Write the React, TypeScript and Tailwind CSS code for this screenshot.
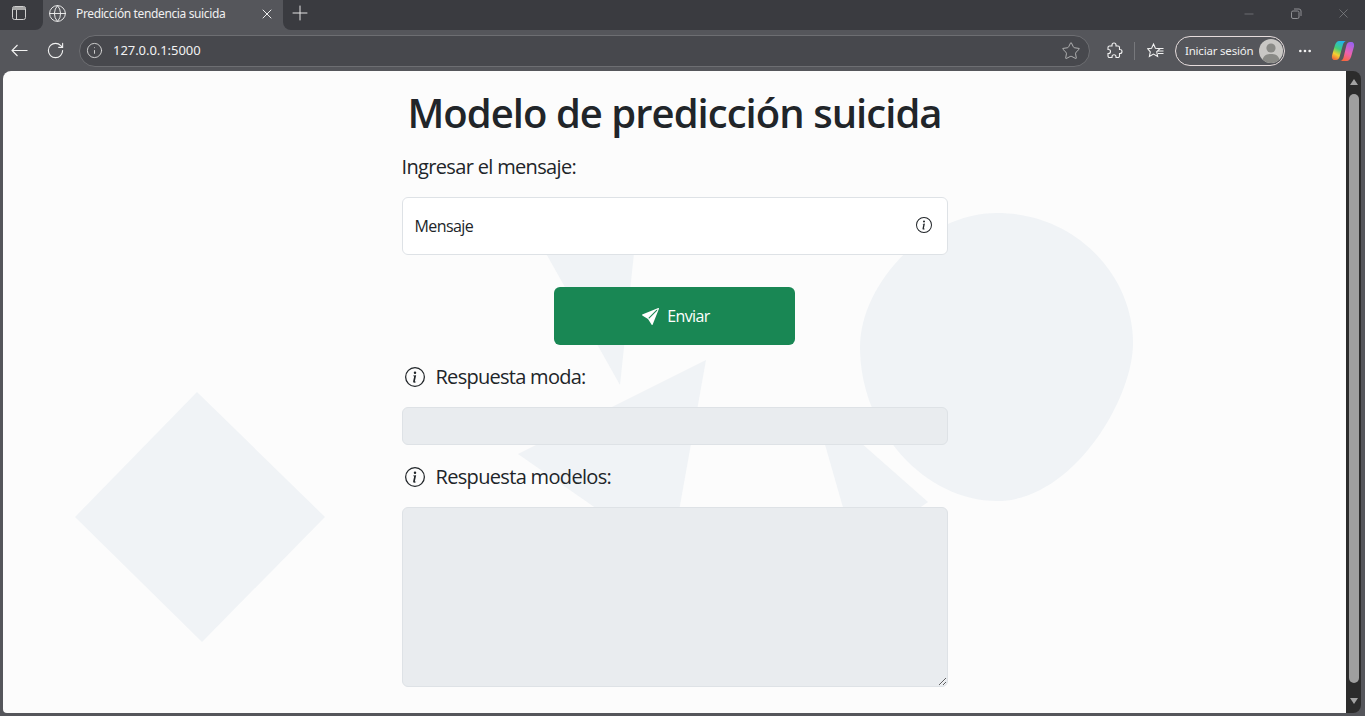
import { RotateCw, Info, Star, Plus, X, Minus, Globe, Ellipsis } from 'lucide-react';

const pageFont = { fontFamily: '"Open Sans", "Noto Sans", sans-serif' };
const chromeFont = { fontFamily: '"Noto Sans", sans-serif' };

function InfoIcon({ size = 20 }: { size?: number }) {
  return (
    <svg width={size} height={size} viewBox="0 0 16 16" fill="currentColor">
      <path d="M8 15A7 7 0 1 1 8 1a7 7 0 0 1 0 14m0 1A8 8 0 1 0 8 0a8 8 0 0 0 0 16" />
      <path d="m8.93 6.588-2.29.287-.082.38.45.083c.294.07.352.176.288.469l-.738 3.468c-.194.897.105 1.319.808 1.319.545 0 1.178-.252 1.465-.598l.088-.416c-.2.176-.492.246-.686.246-.275 0-.375-.193-.304-.533zM9 4.5a1 1 0 1 1-2 0 1 1 0 0 1 2 0" />
    </svg>
  );
}

function Background() {
  return (
    <svg className="absolute inset-0 w-full h-full" viewBox="3 71 1343 642" fill="#f0f3f6">
      <path d="M197 392 L325 517 L202 642 L75 517 Z" />
      <path d="M997 213 C1075 213 1133 275 1133 343 C1133 400 1072 501 997 501 C925 501 860 430 860 347 C860 285 925 213 997 213 Z" />
      <path d="M530 225 L637 225 L620 385 Z" />
      <path d="M706 360 L518 454 L600 511 L679 511 Z" />
      <path d="M818 420 L835 420 L928 502 L915 511 L844 511 Z" />
    </svg>
  );
}

function ProfileAvatar() {
  return (
    <svg width="24" height="24" viewBox="0 0 24 24">
      <circle cx="12" cy="12" r="12" fill="#c9c7c4" />
      <circle cx="12" cy="9" r="4.6" fill="#8a8a86" />
      <path d="M3.5 20.5 C5 16 8 15 12 15 C16 15 19 16 20.5 20.5 A12 12 0 0 1 3.5 20.5 Z" fill="#8a8a86" />
    </svg>
  );
}

function CopilotLogo() {
  return (
    <svg width="24" height="24" viewBox="0 0 24 24">
      <defs>
        <linearGradient id="cpLeft" x1="0.7" y1="0" x2="0.3" y2="1">
          <stop offset="0" stopColor="#1fb4f2" />
          <stop offset="0.45" stopColor="#43cf78" />
          <stop offset="0.75" stopColor="#f5d030" />
          <stop offset="1" stopColor="#f0703a" />
        </linearGradient>
        <linearGradient id="cpRight" x1="0.7" y1="0" x2="0.3" y2="1">
          <stop offset="0" stopColor="#9a62ee" />
          <stop offset="0.55" stopColor="#ee62b0" />
          <stop offset="1" stopColor="#f8673c" />
        </linearGradient>
      </defs>
      <path d="M16 22 H9 C11 22 12 20 12.5 18.5 L15.5 6 C16 4 17.5 3 19 3 H20.5 C22.5 3 23.5 5 23 7.5 L20 18 C19 20.5 17.5 22 16 22 Z" fill="url(#cpRight)" />
      <path d="M8 2 H15.5 C13.5 2 12.5 4 12 5.5 L8.5 18 C8 20 6.5 21 5 21 H3.5 C1.5 21 0.5 19 1 16.5 L4 6 C5 3.5 6.5 2 8 2 Z" fill="url(#cpLeft)" />
    </svg>
  );
}

function TitleBar() {
  return (
    <div className="h-[30px] bg-[#55565b] flex text-white">
      <div className="w-[43px] h-full bg-[#3a3b40] rounded-br-lg flex items-center pl-[12px] pb-[4px]">
        <svg width="14" height="14" viewBox="0 0 14 14" fill="none" stroke="#cfcfcf">
          <rect x="0.5" y="0.5" width="13" height="13" rx="2" />
          <path d="M1 2.5 H13" strokeWidth="3" stroke="#a8a8a8" />
          <path d="M4.5 4 V13.5" />
        </svg>
      </div>
      <div className="w-[240px] h-full flex items-center pl-[5px] pr-[8px] pb-[3px]">
        <Globe size={19} strokeWidth={1.2} className="text-[#eeeeee]" />
        <span className="ml-[9px] flex-1 text-xs tracking-[-0.37px] text-[#f0f0f0]" style={chromeFont}>
          Predicción tendencia suicida
        </span>
        <X size={16} strokeWidth={1.5} className="text-[#eeeeee]" />
      </div>
      <div className="flex-1 h-full bg-[#3a3b40] rounded-bl-lg flex items-center">
        <div className="w-[34px] flex items-center justify-center mb-[4px]">
          <Plus size={24} strokeWidth={1} className="text-[#e4e4e4]" />
        </div>
        <div className="flex-1" />
        <div className="flex items-center text-[#8f9094] pr-[14px] gap-[34px] mb-[3px]">
          <Minus size={14} strokeWidth={1} />
          <svg width="12" height="12" viewBox="0 0 12 12" fill="none" stroke="currentColor">
            <rect x="1.5" y="3" width="7.5" height="7.5" rx="1.5" />
            <path d="M4 1 H9 A2 2 0 0 1 11 3 V8" />
          </svg>
          <X size={15} strokeWidth={1} />
        </div>
      </div>
    </div>
  );
}

function ToolBar() {
  return (
    <div className="h-[41px] bg-[#55565b] flex items-center text-white">
      <svg className="ml-[11px]" width="17" height="13" viewBox="0 0 17 13" fill="none" stroke="#f2f2f2" strokeWidth="1.1">
        <path d="M16.5 6.5 H1 M6.5 1 L1 6.5 L6.5 12" />
      </svg>
      <RotateCw size={19} strokeWidth={1.4} className="ml-[18px] text-[#f2f2f2]" />
      <div className="ml-[14px] w-[1011px] h-[32px] rounded-full bg-[#47484d] border border-[#6d6e72] flex items-center pl-[6px] pr-[8px]">
        <Info size={17} strokeWidth={1.3} className="text-[#d8d8d8]" />
        <span className="ml-[10px] flex-1 text-[13px] tracking-[-0.05px] text-[#f2f2f2]" style={chromeFont}>
          127.0.0.1:5000
        </span>
        <Star size={20} strokeWidth={1} className="text-[#c4c4c4]" />
      </div>
      <svg className="ml-[15px]" width="18" height="18" viewBox="0 0 18 18" fill="none" stroke="#f2f2f2" strokeWidth="1.1">
        <path d="M7 3 a2 2 0 0 1 4 0 V4 H13 a1.5 1.5 0 0 1 1.5 1.5 V7.5 h.5 a2 2 0 0 1 0 4 h-.5 V14 a1.5 1.5 0 0 1 -1.5 1.5 H11 v-.8 a2 2 0 0 0 -4 0 v.8 H4.5 A1.5 1.5 0 0 1 3 14 V11.5 h.5 a2 2 0 0 0 0 -4 H3 V5.5 A1.5 1.5 0 0 1 4.5 4 H7 Z" />
      </svg>
      <div className="ml-[11px] w-px h-[18px] bg-[#77787c]" />
      <svg className="ml-[12px]" width="17" height="17" viewBox="0 0 17 17" fill="none" stroke="#f2f2f2" strokeWidth="1.1">
        <path d="M6.5 2 L8.4 6.2 L13 6.7 L9.7 9.8 L10.6 14.4 L6.5 12.1 L2.4 14.4 L3.3 9.8 L0.7 6.7 L4.6 6.2 Z" />
        <path d="M10.5 6.5 H16.5 M11 9 H16.5 M11 11.5 H16.5" />
      </svg>
      <div className="ml-[11px] w-[110px] h-[30px] rounded-full border border-[#e6dcdc] flex items-center justify-between pl-[9px] pr-[1px]">
        <span className="text-[11.5px] tracking-[-0.2px] text-[#f0f0f0]" style={chromeFont}>
          Iniciar sesión
        </span>
        <ProfileAvatar />
      </div>
      <Ellipsis size={16} className="ml-[12px] text-[#f2f2f2]" />
      <div className="ml-[18px]">
        <CopilotLogo />
      </div>
    </div>
  );
}

function Scrollbar() {
  return (
    <div className="w-[15px] bg-[#2c2c2c] rounded-r-lg flex flex-col items-center pt-[8px] pb-[9px]">
      <div className="w-0 h-0 border-x-[4px] border-x-transparent border-b-[6px] border-b-[#a3a3a3]" />
      <div className="w-[10px] flex-1 mt-[9px] mb-[15px] rounded-full bg-[#9f9f9f]" />
      <div className="w-0 h-0 border-x-[4px] border-x-transparent border-t-[6px] border-t-[#a3a3a3]" />
    </div>
  );
}

export default function App() {
  return (
    <div className="h-[716px] w-[1365px] overflow-hidden bg-[#55565b] flex flex-col">
      <TitleBar />
      <ToolBar />
      <div className="flex h-[642px] pl-[3px] pr-[4px]">
        <div className="relative flex-1 bg-[#fcfcfc] rounded-tl-lg rounded-bl-sm overflow-hidden" style={pageFont}>
          <Background />
          <div className="relative w-[546px] mx-auto pt-[18px] text-[#212529]">
            <h1 className="text-[40px] leading-[48px] font-semibold text-center whitespace-nowrap tracking-[-0.96px]">Modelo de predicción suicida</h1>
            <label className="block mt-[15px] text-xl leading-[30px] tracking-[-0.66px]">Ingresar el mensaje:</label>
            <div className="mt-[15px] h-[58px] bg-white border border-[#dee2e6] rounded-md flex items-center justify-between pl-[12px] pr-[15px]">
              <span className="text-base tracking-[-0.6px]">Mensaje</span>
              <span className="mb-[3px]"><InfoIcon size={16} /></span>
            </div>
            <div className="flex justify-center mt-[32px]">
              <button className="w-[241px] h-[58px] bg-[#198754] rounded-md flex items-center justify-center gap-[8px] pl-[3px] text-white text-base tracking-[-0.6px]">
                <svg width="17" height="17" viewBox="0 0 16 16" fill="currentColor">
                  <path d="M15.964.686a.5.5 0 0 0-.65-.65L.767 5.855H.766l-.452.18a.5.5 0 0 0-.082.887l.41.26.001.002 4.995 3.178 3.178 4.995.002.002.26.41a.5.5 0 0 0 .886-.083zm-1.833 1.89L6.637 10.07l-.215-.338a.5.5 0 0 0-.154-.154l-.338-.215 7.494-7.494 1.178-.471z" />
                </svg>
                Enviar
              </button>
            </div>
            <div className="mt-[17px] h-[30px] flex items-center gap-[11px] pl-[3px] text-xl tracking-[-0.72px]">
              <InfoIcon size={20} />
              <span>Respuesta moda:</span>
            </div>
            <input disabled className="block mt-[15px] w-full h-[38px] bg-[#e9ecef] border border-[#dee2e6] rounded-md" />
            <div className="mt-[17px] h-[30px] flex items-center gap-[11px] pl-[3px] text-xl tracking-[-0.67px]">
              <InfoIcon size={20} />
              <span>Respuesta modelos:</span>
            </div>
            <textarea disabled className="block mt-[15px] w-full h-[180px] bg-[#e9ecef] border border-[#dee2e6] rounded-md" />
          </div>
        </div>
        <Scrollbar />
      </div>
      <div className="h-[3px]" />
    </div>
  );
}
